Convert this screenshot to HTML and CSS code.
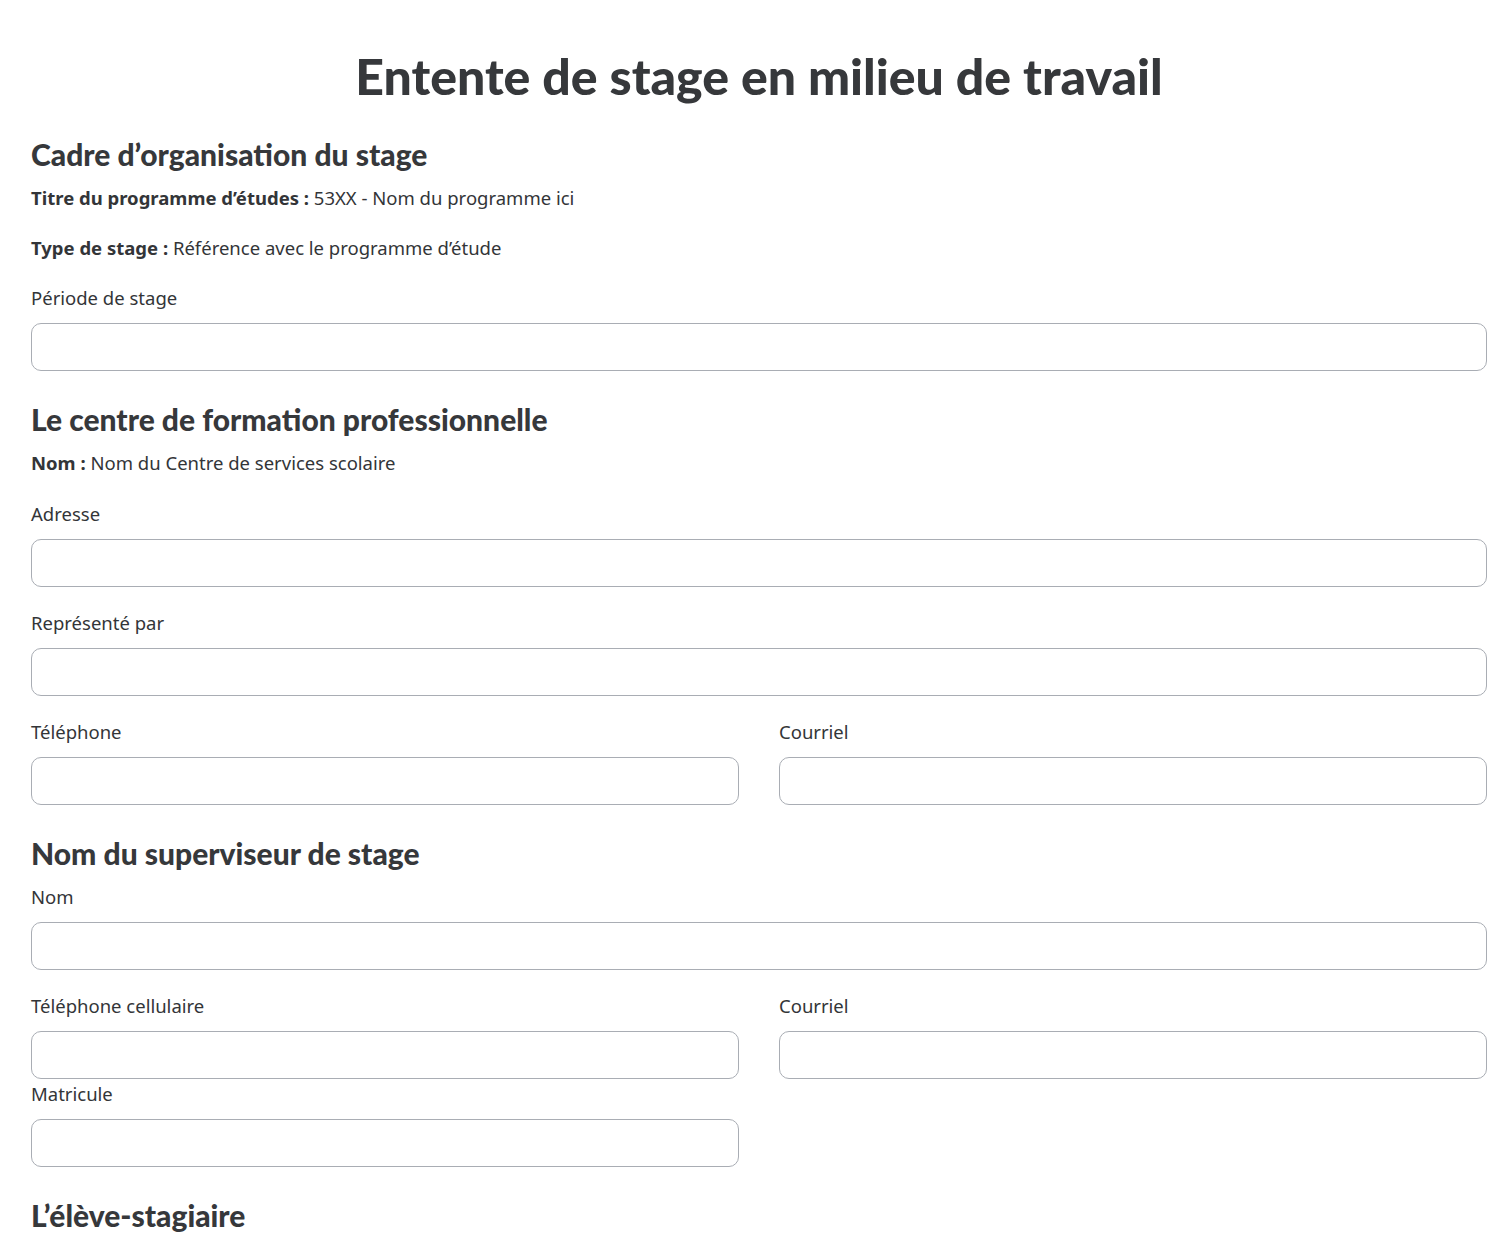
FILE: index.html
```html
<!DOCTYPE html>
<html lang="fr">
<head>
<meta charset="utf-8">
<title>Entente de stage en milieu de travail</title>
<link rel="stylesheet" href="styles.css">
</head>
<body>
<main class="page">
  <h1 class="title">Entente de stage en milieu de travail</h1>

  <h2 class="section">Cadre d’organisation du stage</h2>
  <p class="info"><strong>Titre du programme d’études :</strong> 53XX - Nom du programme ici</p>
  <p class="info"><strong>Type de stage :</strong> Référence avec le programme d’étude</p>
  <div class="field">
    <label class="label">Période de stage</label>
    <input class="input" type="text">
  </div>

  <h2 class="section">Le centre de formation professionnelle</h2>
  <p class="info info-last"><strong>Nom :</strong> Nom du Centre de services scolaire</p>
  <div class="field">
    <label class="label">Adresse</label>
    <input class="input" type="text">
  </div>
  <div class="field">
    <label class="label">Représenté par</label>
    <input class="input" type="text">
  </div>
  <div class="row">
    <div class="field">
      <label class="label">Téléphone</label>
      <input class="input" type="text">
    </div>
    <div class="field">
      <label class="label">Courriel</label>
      <input class="input" type="text">
    </div>
  </div>

  <h2 class="section">Nom du superviseur de stage</h2>
  <div class="field">
    <label class="label">Nom</label>
    <input class="input" type="text">
  </div>
  <div class="row row-tight">
    <div class="field">
      <label class="label">Téléphone cellulaire</label>
      <input class="input" type="text">
    </div>
    <div class="field">
      <label class="label">Courriel</label>
      <input class="input" type="text">
    </div>
  </div>
  <div class="row">
    <div class="field">
      <label class="label">Matricule</label>
      <input class="input" type="text">
    </div>
  </div>

  <h2 class="section">L’élève-stagiaire</h2>
</main>
</body>
</html>
```
FILE: styles.css
```css
html, body {
  margin: 0;
  padding: 0;
  background: #ffffff;
}
body {
  font-family: "Noto Sans", "Open Sans", sans-serif;
  color: #333538;
  height: 1236px;
  overflow: hidden;
}
.page {
  padding: 46px 13px 0 31px;
}
.title {
  margin: 0;
  font-family: "Lato", "Roboto", sans-serif;
  font-weight: 900;
  font-size: 50px;
  line-height: 60px;
  text-align: center;
  color: #36383b;
}
.section {
  margin: 30px 0 14px;
  font-family: "Lato", "Roboto", sans-serif;
  font-weight: 900;
  font-size: 30px;
  line-height: 36px;
  color: #36383b;
}
.title + .section {
  margin-top: 30px;
}
.info {
  margin: 0 0 26px;
  font-size: 18.5px;
  line-height: 24px;
}
.info-last {
  margin-bottom: 27px;
}
.info strong {
  font-weight: 700;
}
.field {
  display: flex;
  flex-direction: column;
  margin-bottom: 24px;
}
.label {
  font-size: 18.5px;
  line-height: 24px;
  margin-bottom: 13px;
}
.input {
  box-sizing: border-box;
  height: 48px;
  width: 100%;
  border: 1px solid #a9adb4;
  border-radius: 10px;
  background: #fff;
  margin: 0;
  padding: 0 12px;
  font: inherit;
}
.row {
  display: grid;
  grid-template-columns: 1fr 1fr;
  column-gap: 40px;
  margin-bottom: 24px;
}
.row .field {
  margin-bottom: 0;
}
.row-tight {
  margin-bottom: 3px;
}
```
